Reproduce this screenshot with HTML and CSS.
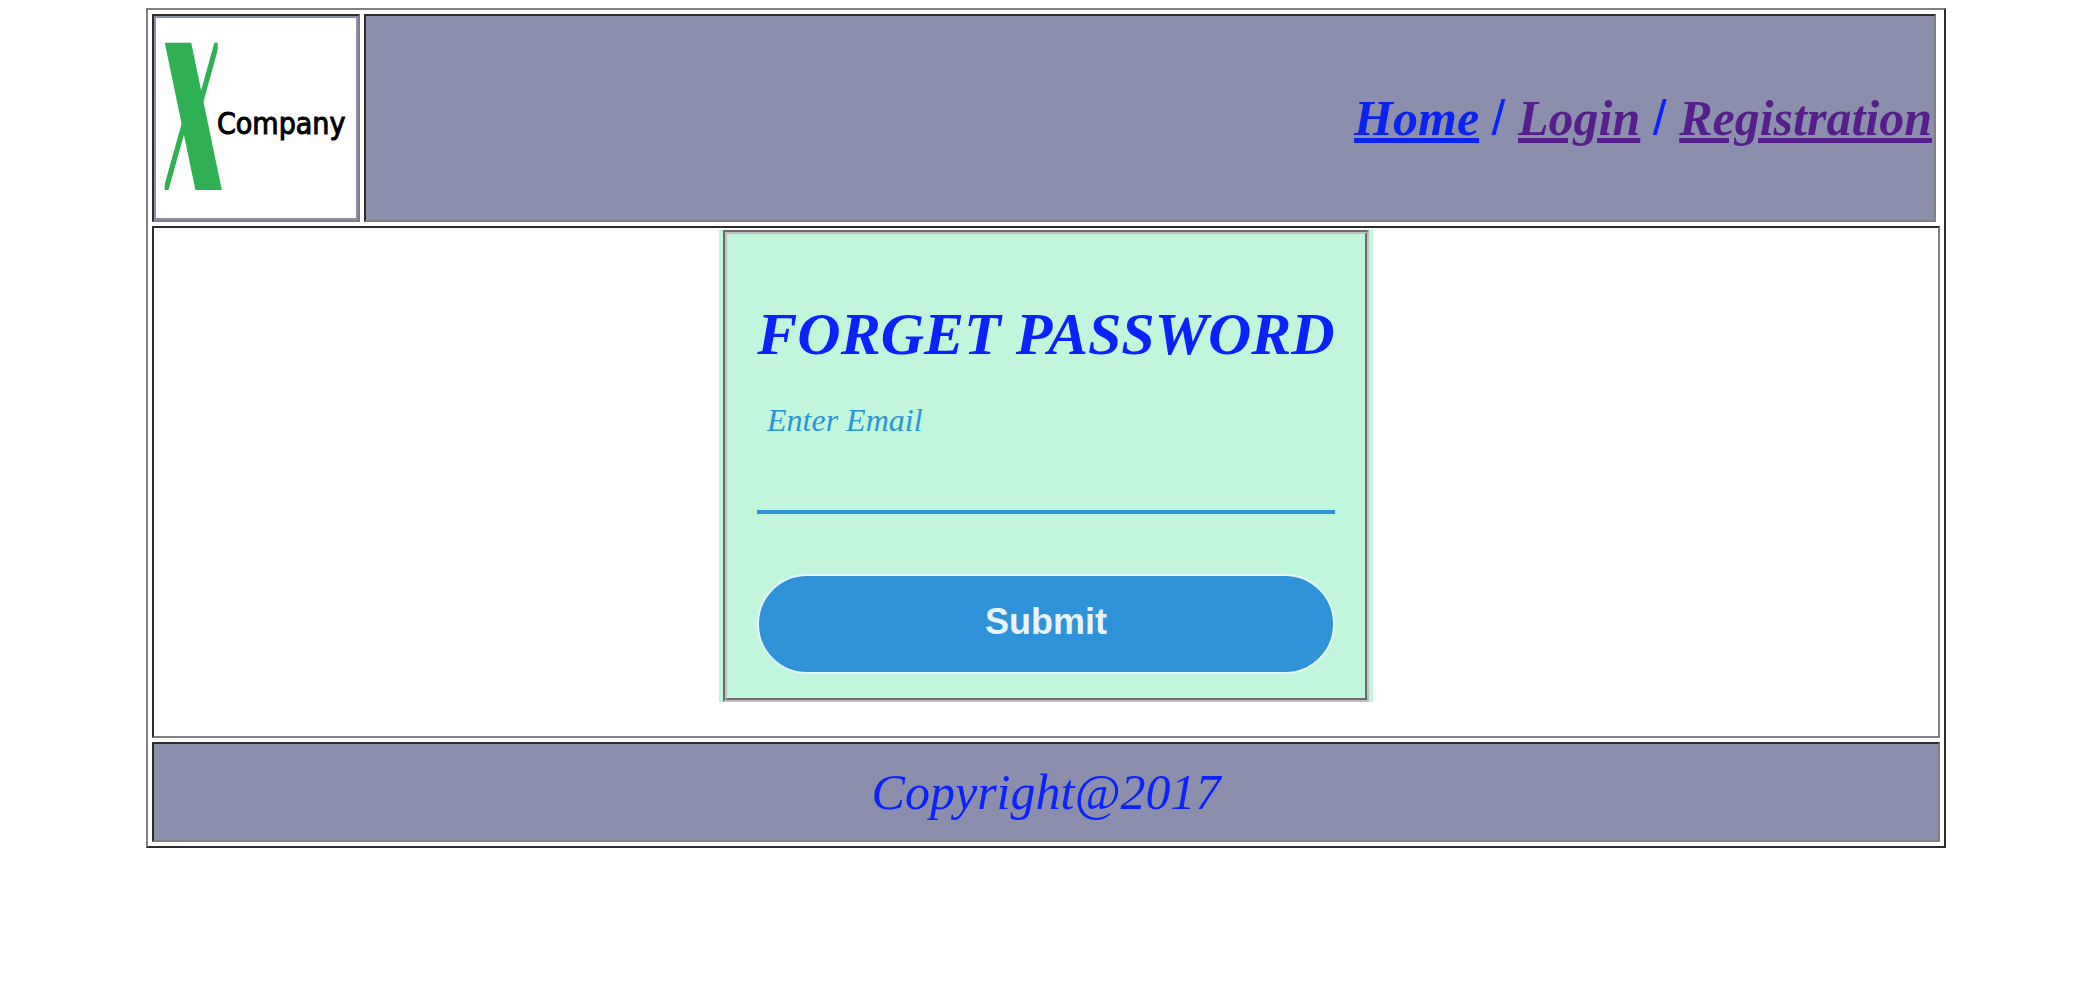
FILE: index.html
```html
<!DOCTYPE html>
<html lang="en">
<head>
<meta charset="utf-8">
<title>Forget Password</title>
<link rel="stylesheet" href="styles.css">
</head>
<body>
<div class="page">
  <header class="header">
    <div class="cell logo-cell">
      <svg class="logo" viewBox="0 0 200 200" role="img" aria-label="X Company">
        <rect width="200" height="200" fill="#fff"/>
        <svg x="8.7" y="24.7" width="57.6" height="147.3" viewBox="8.7 24.7 57.6 147.3">
          <line x1="19.9" y1="14.7" x2="54.7" y2="182" stroke="#2fb052" stroke-width="25.9"/>
        </svg>
        <svg x="8.7" y="24.7" width="53" height="147.3" viewBox="8.7 24.7 53 147.3">
          <line x1="63.8" y1="14.7" x2="41.6" y2="95" stroke="#2fb052" stroke-width="5.2"/>
          <line x1="31.3" y1="95" x2="7" y2="182" stroke="#2fb052" stroke-width="5.2"/>
        </svg>
        <text class="logo-text" x="61" y="116">Company</text>
      </svg>
    </div>
    <nav class="cell nav">
      <a class="link" href="#home">Home</a> <span class="slash">/</span>
      <a class="link seen" href="#login">Login</a> <span class="slash">/</span>
      <a class="link seen" href="#registration">Registration</a>
    </nav>
  </header>
  <main class="cell main">
    <form class="form">
      <fieldset class="box">
        <h1 class="title">FORGET PASSWORD</h1>
        <label class="label" for="email">Enter Email</label>
        <input class="input" id="email" type="email">
        <button class="submit" type="submit">Submit</button>
      </fieldset>
    </form>
  </main>
  <footer class="cell footer">Copyright@2017</footer>
</div>
</body>
</html>
```
FILE: styles.css
```css
* {
  box-sizing: border-box;
}

body {
  margin: 8px 0;
  padding-left: 8px;
  background: #fff;
  color: #0a22ff;
  font-family: "Liberation Serif", "Times New Roman", serif;
  font-style: italic;
}

.page {
  display: flex;
  flex-direction: column;
  gap: 4px;
  max-width: 1800px;
  margin: 0 auto;
  padding: 4px;
  border: 2px solid;
  border-color: #808080 #2c2c2c #2c2c2c #808080;
}

.cell {
  padding: 2px;
  border: 2px solid;
  border-color: #2c2c2c #808080 #808080 #2c2c2c;
}

.header {
  display: flex;
  gap: 4px;
  padding-right: 4px;
}

.logo-cell,
.nav,
.footer {
  background: #8c8fab;
}

.logo {
  display: block;
  width: 200px;
  height: 200px;
}

.logo-text {
  fill: #000;
  stroke: #000;
  stroke-width: 1px;
  font: normal 30px "DejaVu Sans Condensed", "DejaVu Sans", sans-serif;
}

.nav {
  flex: 1;
  align-content: center;
  text-align: right;
  font-size: 50px;
  line-height: 56px;
}

.link {
  color: #0a22ee;
  font-weight: bold;
}

.seen {
  color: #561e8b;
}

.slash {
  font-family: "Liberation Sans", Arial, sans-serif;
  font-style: normal;
}

.main {
  padding-bottom: 34px;
}

.form {
  max-width: 654px;
  margin: 0 auto;
  padding: 0 4px;
  background: #c1f6dc;
}

.box {
  display: flex;
  flex-direction: column;
  margin: 0;
  padding: 66px 30px 24px;
  border: 4px groove #c0c0c0;
}

.title {
  margin: 0 0 34px;
  font-size: 60px;
  line-height: 68px;
  text-align: center;
  white-space: nowrap;
}

.label {
  padding-left: 10px;
  color: #2f93d9;
  font-size: 32px;
  line-height: 36px;
}

.input {
  width: 100%;
  height: 76px;
  margin-bottom: 60px;
  padding: 0 10px;
  border: 0;
  border-bottom: 4px solid #2f93d9;
  background: transparent;
  color: #2f93d9;
  font: inherit;
  font-size: 32px;
}

.submit {
  height: 100px;
  padding: 0 0 4px;
  border: 2px solid #e8f4fc;
  border-radius: 50px;
  background: #2f93d9;
  color: #e8f4fc;
  font: bold 36px "Liberation Sans", Arial, sans-serif;
}

.footer {
  font-size: 50px;
  line-height: 92px;
  text-align: center;
}
```
